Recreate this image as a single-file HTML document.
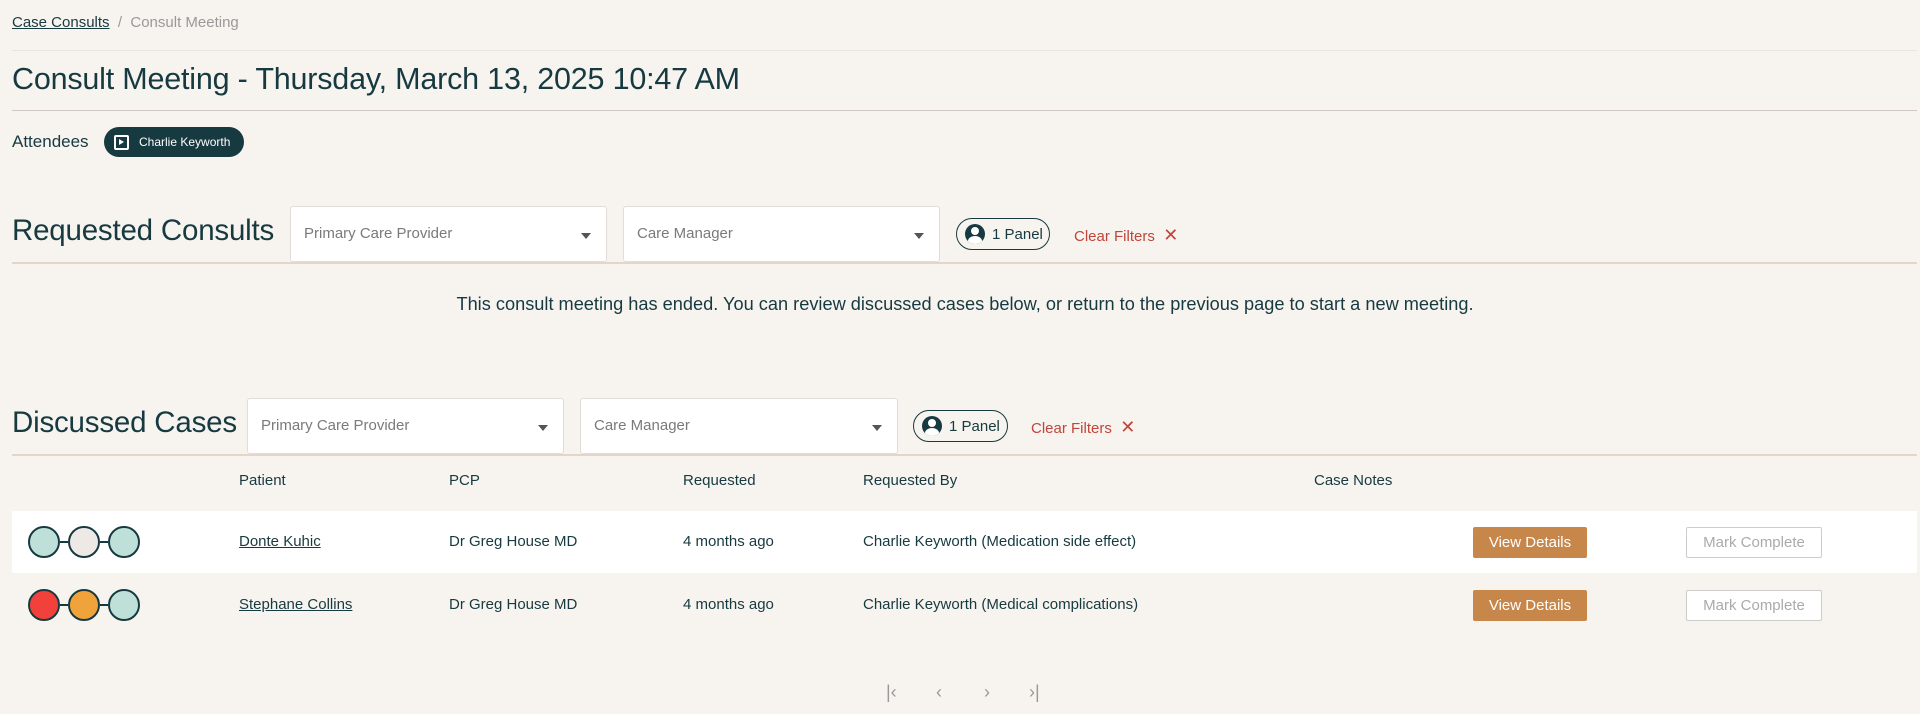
<!DOCTYPE html>
<html><head><meta charset="utf-8"><style>
*{box-sizing:border-box;margin:0;padding:0}
body{width:1920px;height:714px;background:#f7f3ef;font-family:"Liberation Sans",sans-serif;color:#163a40;position:relative;overflow:hidden}
.a{position:absolute}
.line{position:absolute;left:12px;right:3px;height:1px;background:#ddd2c8}
.dd{position:absolute;background:#fff;border:1px solid #e2ddd8;border-radius:3px;height:56px;font-size:15px;color:#7a7a7a;padding:18px 13px}
.dd:after{content:"";position:absolute;right:15px;top:26px;border-left:5px solid transparent;border-right:5px solid transparent;border-top:6px solid #555}
.pill{position:absolute;height:32px;border:1px solid #163a40;border-radius:16px;font-size:15px;display:flex;align-items:center;padding-left:8px;gap:7px;color:#163a40}
.ic{width:20px;height:20px;border-radius:50%;background:#163a40;position:relative;overflow:hidden}
.ic:before{content:"";position:absolute;left:6px;top:3px;width:8px;height:8px;border-radius:50%;background:#fff}
.ic:after{content:"";position:absolute;left:3px;top:12px;width:14px;height:10px;border-radius:50% 50% 0 0;background:#fff}
.cf{position:absolute;color:#c0453a;font-size:15px}
.h2{position:absolute;font-size:29.5px;left:12px;letter-spacing:-0.2px}
.th{position:absolute;top:472px;font-size:15px}
.row{position:absolute;left:12px;width:1905px;height:62px}
.td{position:absolute;font-size:15px}
.btn{position:absolute;width:114px;height:31px;background:#c8874a;color:#fff;font-size:15px;text-align:center;line-height:31px;border-radius:2px}
.mc{position:absolute;width:136px;height:31px;background:#fff;border:1px solid #ccc;color:#aaa;font-size:15px;text-align:center;line-height:29px;border-radius:2px}
.c{position:absolute;width:32px;height:32px;border-radius:50%;border:2px solid #163a40;top:15px}
.cn{position:absolute;top:30px;width:8px;height:2px;background:#163a40}
</style></head><body>
<div class="a" style="left:12px;top:14px;font-size:15px"><span style="text-decoration:underline">Case Consults</span><span style="color:#999">&nbsp; / &nbsp;Consult Meeting</span></div>
<div class="line" style="top:50px;background:#ebe4dd"></div>
<div class="a" style="left:12px;top:62px;font-size:30.5px;letter-spacing:-0.2px">Consult Meeting - Thursday, March 13, 2025 10:47 AM</div>
<div class="line" style="top:110px;background:#d0c8c0"></div>
<div class="a" style="left:12px;top:132px;font-size:17px">Attendees</div>
<div class="a" style="left:104px;top:127px;width:140px;height:30px;border-radius:15px;background:#163a40;color:#fff;font-size:12px;line-height:30px;padding-left:35px">Charlie Keyworth
<div class="a" style="left:10px;top:8px;width:15px;height:15px;border:2px solid #fff;border-radius:2px"><div class="a" style="left:3px;top:2px;border-left:5px solid #fff;border-top:3.5px solid transparent;border-bottom:3.5px solid transparent"></div></div></div>

<div class="h2" style="top:214px">Requested Consults</div>
<div class="dd" style="left:290px;top:206px;width:317px">Primary Care Provider</div>
<div class="dd" style="left:623px;top:206px;width:317px">Care Manager</div>
<div class="pill" style="left:956px;top:218px;width:94px"><div class="ic"></div>1 Panel</div>
<div class="cf" style="left:1074px;top:225px">Clear Filters &nbsp;<span style="font-size:18px">✕</span></div>
<div class="line" style="top:262px;background:#e6d5c6;height:2px"></div>
<div class="a" style="left:0;width:1930px;text-align:center;top:294px;font-size:18.2px">This consult meeting has ended. You can review discussed cases below, or return to the previous page to start a new meeting.</div>

<div class="h2" style="top:406px">Discussed Cases</div>
<div class="dd" style="left:247px;top:398px;width:317px">Primary Care Provider</div>
<div class="dd" style="left:580px;top:398px;width:318px">Care Manager</div>
<div class="pill" style="left:913px;top:410px;width:95px"><div class="ic"></div>1 Panel</div>
<div class="cf" style="left:1031px;top:417px">Clear Filters &nbsp;<span style="font-size:18px">✕</span></div>
<div class="line" style="top:454px;background:#e6d5c6;height:2px"></div>

<div class="th" style="left:239px">Patient</div>
<div class="th" style="left:449px">PCP</div>
<div class="th" style="left:683px">Requested</div>
<div class="th" style="left:863px">Requested By</div>
<div class="th" style="left:1314px">Case Notes</div>

<div class="row" style="top:511px;background:#fff">
<div class="c" style="left:16px;background:#bfe0d8"></div><div class="cn" style="left:48px"></div>
<div class="c" style="left:56px;background:#efe9e6"></div><div class="cn" style="left:88px"></div>
<div class="c" style="left:96px;background:#bfe0d8"></div>
<div class="td" style="left:227px;top:22px;text-decoration:underline">Donte Kuhic</div>
<div class="td" style="left:437px;top:22px">Dr Greg House MD</div>
<div class="td" style="left:671px;top:22px">4 months ago</div>
<div class="td" style="left:851px;top:22px">Charlie Keyworth (Medication side effect)</div>
<div class="btn" style="left:1461px;top:16px">View Details</div>
<div class="mc" style="left:1674px;top:16px">Mark Complete</div>
</div>
<div class="row" style="top:574px">
<div class="c" style="left:16px;background:#f2413a"></div><div class="cn" style="left:48px"></div>
<div class="c" style="left:56px;background:#f0a33a"></div><div class="cn" style="left:88px"></div>
<div class="c" style="left:96px;background:#bfe0d8"></div>
<div class="td" style="left:227px;top:22px;text-decoration:underline">Stephane Collins</div>
<div class="td" style="left:437px;top:22px">Dr Greg House MD</div>
<div class="td" style="left:671px;top:22px">4 months ago</div>
<div class="td" style="left:851px;top:22px">Charlie Keyworth (Medical complications)</div>
<div class="btn" style="left:1461px;top:16px">View Details</div>
<div class="mc" style="left:1674px;top:16px">Mark Complete</div>
</div>
<div class="a" style="left:886px;top:682px;font-size:18px;color:#999">|‹</div>
<div class="a" style="left:936px;top:682px;font-size:18px;color:#999">‹</div>
<div class="a" style="left:984px;top:682px;font-size:18px;color:#999">›</div>
<div class="a" style="left:1029px;top:682px;font-size:18px;color:#999">›|</div>
</body></html>
